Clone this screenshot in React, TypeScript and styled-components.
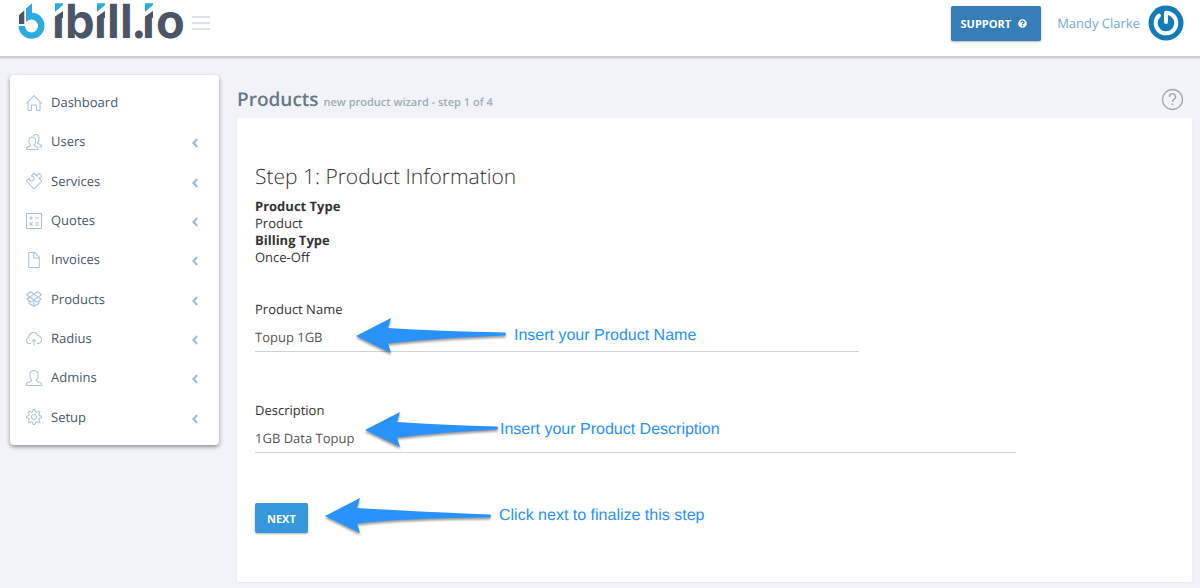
import React from "react";
import styled, { createGlobalStyle } from "styled-components";
import {
  SlHome,
  SlPuzzle,
  SlCalculator,
  SlDoc,
  SlSocialDropbox,
  SlCloudUpload,
  SlUser,
  SlSettings,
  SlPeople,
} from "react-icons/sl";
import { FaAngleLeft, FaQuestionCircle } from "react-icons/fa";
import type { IconType } from "react-icons";

const GlobalStyle = createGlobalStyle`
  *, *::before, *::after { box-sizing: border-box; }
  body {
    margin: 0;
    background: #f1f3f8;
    color: #333;
    font-family: "Open Sans", "Liberation Sans", sans-serif;
    font-size: 13px;
    line-height: 17px;
    text-rendering: geometricPrecision;
  }
`;

const Header = styled.header`
  display: flex;
  align-items: flex-start;
  height: 57px;
  padding: 0 16px 0 17px;
  background: #fff;
  border-bottom: 1px solid #c9d1d6;
  box-shadow: 0 1px 2px rgba(60, 70, 80, 0.3);
`;

const LogoLink = styled.a`
  display: block;
  height: 42px;
`;

const MenuToggle = styled.button`
  display: flex;
  flex-direction: column;
  gap: 4px;
  margin: 16px auto 0 4px;
  padding: 0;
  border: 0;
  background: none;
`;

const ToggleBar = styled.span`
  width: 18px;
  height: 2px;
  background: #dde3ee;
`;

const Button = styled.button<{ $tone: "support" | "next" }>`
  display: inline-flex;
  align-items: center;
  justify-content: center;
  gap: ${(p) => (p.$tone === "support" ? 7 : 0)}px;
  height: ${(p) => (p.$tone === "support" ? 35 : 30)}px;
  padding: ${(p) => (p.$tone === "support" ? "0 14px 0 10px" : "0 12px")};
  border: 0;
  border-radius: 2px;
  background: ${(p) => (p.$tone === "support" ? "#367eb7" : "#3598dc")};
  box-shadow: 0 1px 2px rgba(0, 0, 0, 0.3);
  color: #fff;
  font-family: inherit;
  font-size: 11px;
  font-weight: 700;
  text-transform: uppercase;
`;

const HeaderTools = styled.div`
  display: flex;
  align-items: center;
  gap: 16px;
  padding-top: 5px;
`;

const UserLink = styled.a`
  display: flex;
  align-items: center;
  gap: 8px;
  color: #76a9d6;
  font-weight: 500;
  text-decoration: none;
`;

const Page = styled.div`
  display: flex;
  align-items: flex-start;
  gap: 18px;
  padding: 18px 8px 6px 10px;
`;

const Sidebar = styled.nav`
  flex: 0 0 209px;
  padding: 8px 0;
  border-radius: 4px;
  background: #fff;
  box-shadow: 0 2px 4px rgba(0, 0, 0, 0.4);
`;

const Menu = styled.ul`
  display: grid;
  grid-auto-rows: 1fr;
  min-height: 354px;
  margin: 0;
  padding: 0;
  list-style: none;
`;

const MenuLink = styled.a`
  display: flex;
  align-items: center;
  gap: 9px;
  height: 100%;
  padding: 0 17px 0 16px;
  color: #485a6a;
  text-decoration: none;

  svg:first-child {
    color: #a9c1d5;
  }
`;

const MenuArrow = styled(FaAngleLeft)`
  margin: 3px 0 0 auto;
  color: #a2bdd1;
`;

const Main = styled.main`
  flex: 1;
  min-width: 0;
`;

const TitleBar = styled.div`
  display: flex;
  align-items: center;
  justify-content: space-between;
  height: 43px;
  padding: 6px 8px 0 0;
`;

const PageTitle = styled.h1`
  margin: 3px 0 0;
  color: #697882;
  font-size: 19px;
  font-weight: 600;
  line-height: 26px;
`;

const Subtitle = styled.small`
  color: #9eacb4;
  font-size: 11px;
  font-weight: 600;
`;

const HelpButton = styled.button`
  padding: 0;
  border: 0;
  background: none;
  line-height: 0;
`;

const Panel = styled.form`
  padding: 44px 18px 49px;
  background: #fff;
  box-shadow: 0 1px 2px rgba(0, 0, 0, 0.05);
`;

const StepTitle = styled.h2`
  margin: 0 0 6px;
  font-size: 21px;
  font-weight: 300;
  line-height: 30px;
`;

const Facts = styled.dl`
  margin: 0 0 35px;

  dt { font-weight: 700; }
  dd { margin: 0; }
`;

const Field = styled.div<{ $span: number }>`
  position: relative;
  width: ${(p) => p.$span}%;
  margin-bottom: 50px;
`;

const FieldLabel = styled.label`
  display: block;
`;

const TextInput = styled.input`
  display: block;
  width: 100%;
  height: 34px;
  padding: 4px 0 0;
  border: 0;
  border-bottom: 1px solid #cdd4dc;
  border-radius: 0;
  outline: 0;
  background: transparent;
  color: #555;
  font: inherit;
  text-rendering: inherit;
`;

const Actions = styled.div`
  position: relative;
`;

const Callout = styled.div<{ $left: number; $top: number; $gap: number }>`
  position: absolute;
  left: ${(p) => p.$left}px;
  top: ${(p) => p.$top}px;
  display: flex;
  align-items: center;
  gap: ${(p) => p.$gap}px;
  color: #2a92fb;
  font-family: "Liberation Sans", Arial, sans-serif;
  font-size: 16px;
  line-height: 20px;
  white-space: nowrap;
  pointer-events: none;

  svg {
    overflow: visible;
    filter: drop-shadow(0 2px 1px rgba(0, 0, 0, 0.4));
  }
`;

const LogoText = styled.text`
  font-family: Inter, sans-serif;
  font-size: 47px;
  font-weight: 700;
  fill: #4b5566;
`;

const letters = [
  { char: "i", x: 35 },
  { char: "b", x: 48 },
  { char: "i", x: 77 },
  { char: "l", x: 90 },
  { char: "l", x: 103 },
  { char: ".", x: 114 },
  { char: "i", x: 125 },
  { char: "o", x: 139 },
];

function Logo() {
  return (
    <svg width="171" height="50" viewBox="0 0 171 50" aria-hidden="true">
      <path d="M2 15 7.300 10.500V24H2Z" fill="#4b5566" />
      <path
        d="M9 8.500 15 3.300V12.700A13 13 0 1 1 1.500 26H8A6.500 6.500 0 1 0 14.500 19.500Q11 19.500 9 22Z"
        fill="#2cabe2"
      />
      <LogoText y="38" x={letters.map((l) => l.x).join(" ")}>
        {letters.map((l) => l.char).join("")}
      </LogoText>
      {[38, 80, 128].map((x) => (
        <g key={x}>
          <path d={`M${x - 1} 0H${x + 9}V12L${x - 1} 18Z`} fill="#fff" />
          <path d={`M${x} 3.300H${x + 8}V5L${x} 12Z`} fill="#2cabe2" />
          <path d={`M${x} 18V16.500L${x + 8} 11V18Z`} fill="#4b5566" />
        </g>
      ))}
    </svg>
  );
}

function Avatar() {
  return (
    <svg width="36" height="36" viewBox="0 0 36 36" aria-hidden="true">
      <circle cx="18" cy="18" r="17.500" fill="#127cb8" />
      <g fill="none" stroke="#fff" strokeWidth="4" strokeLinecap="round">
        <path d="M11 10.500A10.300 10.300 0 1 0 25 10.500" />
        <path d="M25 10.500Q22 7.700 18 7.700V17" strokeLinejoin="round" />
      </g>
    </svg>
  );
}

function Arrow({ length, tail }: { length: number; tail: number }) {
  return (
    <svg width={length} height="36" viewBox={`0 0 ${length} 36`} aria-hidden="true">
      <path
        d={`M0 18 35 0 32 10Q80 13 ${length - 1} ${tail - 1.5}Q${length + 1} ${tail} ${length - 1} ${tail + 1.5}Q80 20 32 25.500L35 35Z`}
        fill="#2a92fb"
      />
    </svg>
  );
}

const menuItems: { label: string; icon: IconType; nested: boolean }[] = [
  { label: "Dashboard", icon: SlHome, nested: false },
  { label: "Users", icon: SlPeople, nested: true },
  { label: "Services", icon: SlPuzzle, nested: true },
  { label: "Quotes", icon: SlCalculator, nested: true },
  { label: "Invoices", icon: SlDoc, nested: true },
  { label: "Products", icon: SlSocialDropbox, nested: true },
  { label: "Radius", icon: SlCloudUpload, nested: true },
  { label: "Admins", icon: SlUser, nested: true },
  { label: "Setup", icon: SlSettings, nested: true },
];

export default function App() {
  return (
    <>
      <GlobalStyle />
      <Header>
        <LogoLink href="#" aria-label="ibill.io">
          <Logo />
        </LogoLink>
        <MenuToggle type="button" aria-label="Toggle menu">
          <ToggleBar />
          <ToggleBar />
          <ToggleBar />
        </MenuToggle>
        <HeaderTools>
          <Button type="button" $tone="support">
            Support <FaQuestionCircle size={9} />
          </Button>
          <UserLink href="#">
            Mandy Clarke
            <Avatar />
          </UserLink>
        </HeaderTools>
      </Header>
      <Page>
        <Sidebar>
          <Menu>
            {menuItems.map(({ label, icon: Icon, nested }) => (
              <li key={label}>
                <MenuLink href="#">
                  <Icon size={16} />
                  {label}
                  {nested && <MenuArrow size={14} />}
                </MenuLink>
              </li>
            ))}
          </Menu>
        </Sidebar>
        <Main>
          <TitleBar>
            <PageTitle>
              Products <Subtitle>new product wizard - step 1 of 4</Subtitle>
            </PageTitle>
            <HelpButton type="button" aria-label="Help">
              <svg width="23" height="23" viewBox="0 0 23 23" fill="none" stroke="#a3abb2">
                <circle cx="11.500" cy="11.500" r="10" strokeWidth="1.300" />
                <path d="M8.500 9A3 3 0 1 1 13 11.300Q11.500 12.200 11.500 14" strokeWidth="1.500" />
                <path d="M11.500 15.500V17" strokeWidth="1.500" />
              </svg>
            </HelpButton>
          </TitleBar>
          <Panel onSubmit={(e) => e.preventDefault()}>
            <StepTitle>Step 1: Product Information</StepTitle>
            <Facts>
              <dt>Product Type</dt>
              <dd>Product</dd>
              <dt>Billing Type</dt>
              <dd>Once-Off</dd>
            </Facts>
            <Field $span={65.7}>
              <FieldLabel htmlFor="name">Product Name</FieldLabel>
              <TextInput id="name" defaultValue="Topup 1GB" />
              <Callout $left={101} $top={17} $gap={8}>
                <Arrow length={150} tail={16} />
                Insert your Product Name
              </Callout>
            </Field>
            <Field $span={82.8}>
              <FieldLabel htmlFor="description">Description</FieldLabel>
              <TextInput id="description" defaultValue="1GB Data Topup" />
              <Callout $left={110} $top={10} $gap={2}>
                <Arrow length={133} tail={16} />
                Insert your Product Description
              </Callout>
            </Field>
            <Actions>
              <Button type="submit" $tone="next">
                Next
              </Button>
              <Callout $left={70} $top={-5} $gap={8}>
                <Arrow length={166} tail={18} />
                Click next to finalize this step
              </Callout>
            </Actions>
          </Panel>
        </Main>
      </Page>
    </>
  );
}
